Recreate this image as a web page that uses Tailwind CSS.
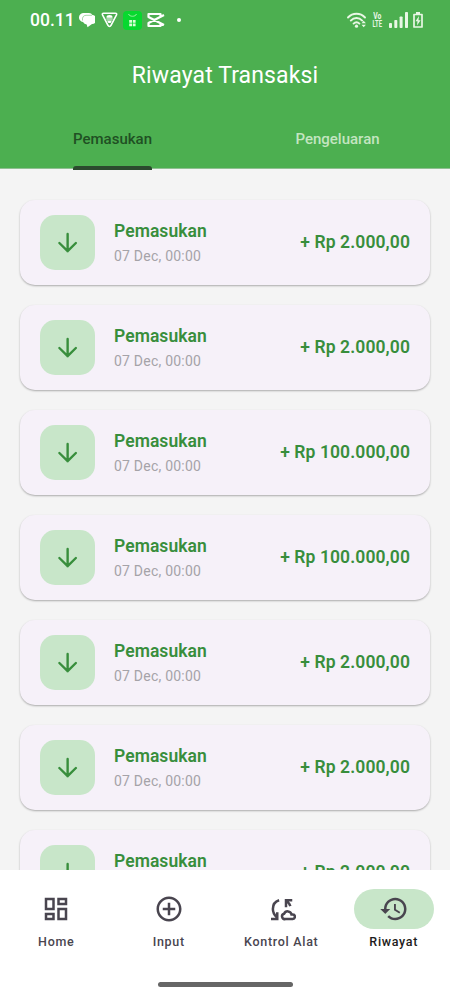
<!DOCTYPE html>
<html lang="id">
<head>
<meta charset="utf-8">
<title>Riwayat Transaksi</title>
<script src="https://cdn.jsdelivr.net/npm/@tailwindcss/browser@4"></script>
</head>
<body class="w-[450px] h-[1000px] overflow-hidden bg-[#f4f4f4] font-['Roboto',sans-serif] flex flex-col">
<svg class="hidden">
  <symbol id="down" viewBox="0 0 24 24"><path fill="none" stroke="currentColor" stroke-width="1.900" stroke-linecap="round" stroke-linejoin="round" d="M11.700 4.800v13.700M5.100 12l6.600 6.500 6.600-6.500"/></symbol>
</svg>
<header class="h-[169px] shrink-0 bg-[#4caf50] text-white flex flex-col border-b border-[#8fbf91]">
  <div class="h-10 pl-[30px] pr-[27px] flex items-center justify-between">
    <div class="flex items-center">
      <span class="w-[45px] text-[17.5px] font-medium leading-10 tracking-[0px] whitespace-nowrap">00.11</span>
      <svg class="ml-[4px] w-4 h-4" viewBox="0 0 16 16"><path fill="#fff" d="M5 1h5a4 4 0 0 1 3.500 2A4.500 4.500 0 0 1 13 12l-4.500 3.300-.8-2.900A5 5 0 0 1 4 10 4.500 4.500 0 0 1 5 1z"/><path fill="none" stroke="#4caf50" stroke-width=".5" d="M3.500 8.500C3 5 4.500 3.500 7 3.300h6"/></svg>
      <svg class="ml-[6px] w-[17px] h-4" viewBox="0 0 17 16"><path fill="none" stroke="#fff" stroke-width="1.600" stroke-linejoin="round" d="M2.500 1.200h12c1 0 1.400.8 1 1.700L10 13.400c-.7 1.400-2.300 1.400-3 0L1.500 2.900c-.4-.9 0-1.700 1-1.700z"/><path fill="#fff" d="M5.500 5a3 2 0 0 1 6 0v.8h-6zM5.300 6.600h6.400v1H5.300zM6 8.400h5L9.600 11H7.400z"/></svg>
      <svg class="ml-[5px] w-[19px] h-[19px]" viewBox="0 0 19 19"><rect width="19" height="19" rx="4" fill="#08d82f"/><path fill="none" stroke="#b8f5b5" stroke-width=".8" d="M5.500 3c1 3 7 3 8 0"/><path fill="#d8ffd5" d="M6.200 9h2.800v2.800H6.200zM9.800 9h2.800v2.800H9.800zM6.200 12.500h2.800v2.800H6.200zM9.800 12.500h2.800v2.800H9.800z"/></svg>
      <svg class="ml-[4px] w-[19px] h-4" viewBox="0 0 19 16"><path fill="none" stroke="#fff" stroke-width="2.200" stroke-linejoin="round" d="M18 3 2.500 11V14h12v-2.300M18 13 2.500 5V2h12v2.300"/></svg>
      <span class="ml-[12px] w-1 h-1 rounded-full bg-white"></span>
    </div>
    <div class="flex items-center">
      <svg class="w-[20px] h-[16px]" viewBox="0 0 20 16"><g fill="none" stroke="#e9f7e5" stroke-width="1.900" stroke-linecap="round"><path d="M1 5.500c4.600-5 12.400-5 17 0M3.800 8.600c3.200-3.400 8.200-3.400 11.400 0M6.600 11.600c1.800-1.800 4-1.800 5.800 0"/></g><circle cx="9.500" cy="14.200" r="1.600" fill="#e9f7e5"/><path fill="#e9f7e5" d="M14.500 11.300l2.200-2.500 2.200 2.500zM14.500 12.700h4.400l-2.200 2.500z"/></svg>
      <div class="ml-[5px] w-[11px] h-[16px] flex flex-col items-center text-[#e9f7e5] text-[9px] font-bold"><span class="leading-[8px] scale-x-75">Vo</span><span class="leading-[8px] scale-x-[.65]">LTE</span></div>
      <svg class="ml-[6px] w-5 h-4" viewBox="0 0 20 16"><g fill="#e9f7e5"><rect x="0" y="11" width="3" height="5" rx=".8"/><rect x="5.300" y="8" width="3" height="8" rx=".8"/><rect x="10.600" y="4.500" width="3" height="11.500" rx=".8"/><rect x="16" y="0" width="3" height="16" rx=".8"/></g></svg>
      <svg class="ml-[4px] w-[10px] h-4" viewBox="0 0 10 16"><path fill="none" stroke="#e9f7e5" stroke-width="1.700" stroke-linejoin="round" d="M1 2.500h8v12.500H1z"/><path fill="#e9f7e5" d="M3 0h4v2H3zM6 4 2.500 9.300h2L4 13.500l3.600-5.300H5.500z"/></svg>
    </div>
  </div>
  <h1 class="h-[70px] text-center text-[23px] leading-[71px] tracking-[0.12px] font-normal">Riwayat Transaksi</h1>
  <div class="h-[60px] shrink-0 grid grid-cols-2 text-[15px] font-medium leading-[18px]">
    <div class="flex flex-col items-center justify-between pt-[20px]"><span class="text-[#205023]">Pemasukan</span><span class="w-[79px] h-1 rounded-t-[3px] bg-[#2b4a2e] z-10"></span></div>
    <div class="flex flex-col items-center pt-[20px]"><span class="text-[#c3e5c0]">Pengeluaran</span></div>
  </div>
</header>
<main id="list" class="flex-1 min-h-0 overflow-hidden px-5 pt-[31px] flex flex-col gap-5"></main>
<nav class="h-[130px] shrink-0 bg-white text-[#49454f] flex flex-col">
  <div class="pt-[19px] grid grid-cols-4 text-[12.5px] font-medium leading-[18px] tracking-[0.7px] text-center">
    <div class="flex flex-col items-center gap-1"><div class="w-20 h-10 rounded-full flex items-center justify-center"><svg class="w-[30px] h-[30px]" viewBox="0 0 24 24" fill="currentColor"><path d="M19 5v2h-4V5h4M9 5v6H5V5h4m10 8v6h-4v-6h4M9 17v2H5v-2h4M21 3h-8v6h8V3zM11 3H3v10h8V3zm10 8h-8v10h8V11zm-10 4H3v6h8v-6z"/></svg></div><span>Home</span></div>
    <div class="flex flex-col items-center gap-1"><div class="w-20 h-10 rounded-full flex items-center justify-center"><svg class="w-[30px] h-[30px]" viewBox="0 0 24 24" fill="currentColor"><path d="M13 7h-2v4H7v2h4v4h2v-4h4v-2h-4V7zm-1-5C6.480 2 2 6.480 2 12s4.480 10 10 10 10-4.480 10-10S17.520 2 12 2zm0 18c-4.410 0-8-3.590-8-8s3.590-8 8-8 8 3.590 8 8-3.590 8-8 8z"/></svg></div><span>Input</span></div>
    <div class="flex flex-col items-center gap-1"><div class="w-20 h-10 rounded-full flex items-center justify-center"><svg class="w-[30px] h-[30px]" viewBox="0 0 24 24" fill="none" stroke="currentColor" stroke-width="2"><path d="M10.500 5C7.500 5.900 5.500 8.700 5.500 12c0 2.600 1 4.600 3 6.500M4 20h5v-5.500M21 5h-5v5.500M16.500 5.500c1.400 1.200 2.400 2.400 3 4.200"/><path d="M15.500 20h5.700a1.800 1.800 0 0 0 .2-3.600h-1a3.100 3.100 0 0 0-5.900-.6A2.150 2.150 0 0 0 15.500 20z"/></svg></div><span>Kontrol Alat</span></div>
    <div class="flex flex-col items-center gap-1"><div class="w-20 h-10 rounded-full bg-[#c8e6c9] flex items-center justify-center"><svg class="w-[30px] h-[30px]" viewBox="0 0 24 24" fill="currentColor"><path d="M13 3c-4.970 0-9 4.030-9 9H1l3.890 3.890.07.140L9 12H6c0-3.870 3.130-7 7-7s7 3.130 7 7-3.130 7-7 7c-1.930 0-3.680-.790-4.940-2.060l-1.420 1.420C8.270 19.990 10.510 21 13 21c4.970 0 9-4.030 9-9s-4.030-9-9-9zm-1 5v5l4.280 2.540.72-1.210-3.500-2.080V8H12z"/></svg></div><span class="text-[#1d1b20]">Riwayat</span></div>
  </div>
  <div class="mt-[31px] mx-auto w-[135px] h-[5px] rounded-full bg-[#666]"></div>
</nav>
<script>
const amounts = ['2.000,00','2.000,00','100.000,00','100.000,00','2.000,00','2.000,00','2.000,00'];
document.getElementById('list').innerHTML = amounts.map(a => `
<article class="h-[85px] shrink-0 rounded-[15px] bg-[#f6f1f9] shadow-[0_1px_2px_rgba(0,0,0,0.3)] px-5 flex items-center">
  <div class="w-[55px] h-[55px] rounded-[15px] bg-[#c8e6c9] text-[#388e3c] flex items-center justify-center"><svg class="w-[30px] h-[30px]"><use href="#down"/></svg></div>
  <div class="ml-[19px] pt-[2px] flex flex-col">
    <span class="text-[17.5px] leading-[25px] font-semibold tracking-[0.05px] text-[#388e3c]">Pemasukan</span>
    <span class="text-[14px] leading-[25px] tracking-[0.22px] text-[#a5a3a8]">07 Dec, 00:00</span>
  </div>
  <span class="ml-auto text-[17.5px] font-semibold tracking-[0.1px] text-[#388e3c]">+ Rp ${a}</span>
</article>`).join('');
</script>
</body>
</html>
